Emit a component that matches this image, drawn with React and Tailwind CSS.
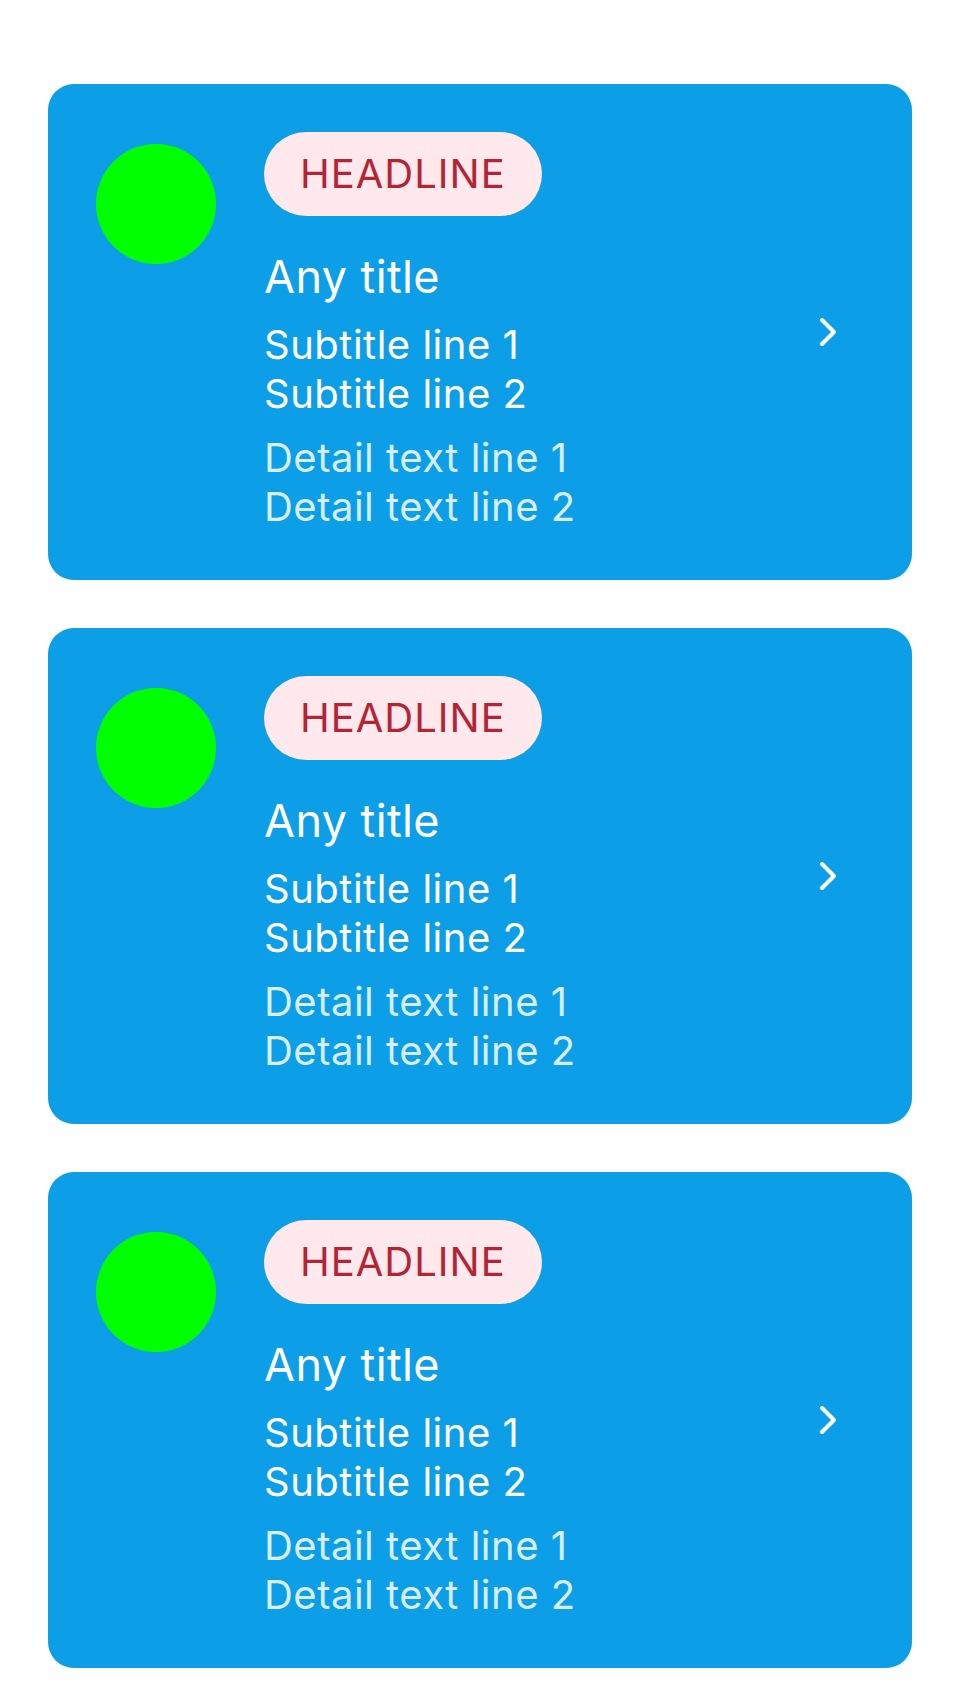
const items = [1, 2, 3];

function Chevron() {
  return (
    <svg width="18" height="30" viewBox="0 0 18 30" fill="none" stroke="white" strokeWidth="4" strokeLinecap="round" strokeLinejoin="round">
      <path d="M3 3 L15 15 L3 27" />
    </svg>
  );
}

function Card() {
  return (
    <div className="flex rounded-[26px] bg-[#0d9ee8] pl-[48px] pr-[75px]">
      <div className="mt-[60px] h-[120px] w-[120px] shrink-0 rounded-full bg-[#00ff00]" />
      <div className="ml-[48px] flex-1 pt-[48px] pb-[49px]">
        <span className="inline-flex h-[84px] items-center rounded-full bg-[#ffe9ec] px-[36px] text-[40px] tracking-[1px] text-[#b32436]">HEADLINE</span>
        <p className="mt-[34px] text-[45px] leading-[54px] tracking-[0.4px] text-white">Any title</p>
        <div className="mt-[16px] text-[40px] leading-[49px] tracking-[0.5px] text-white">
          <p>Subtitle line 1</p>
          <p>Subtitle line 2</p>
        </div>
        <div className="mt-[15px] text-[40px] leading-[49px] tracking-[0.5px] text-[#d9eefb]">
          <p>Detail text line 1</p>
          <p>Detail text line 2</p>
        </div>
      </div>
      <div className="flex items-center">
        <Chevron />
      </div>
    </div>
  );
}

export default function App() {
  return (
    <main className="min-h-[1704px] bg-white px-[48px] pt-[84px] font-['Inter',sans-serif]">
      <div className="flex flex-col gap-[48px]">
        {items.map((i) => (
          <Card key={i} />
        ))}
      </div>
    </main>
  );
}
